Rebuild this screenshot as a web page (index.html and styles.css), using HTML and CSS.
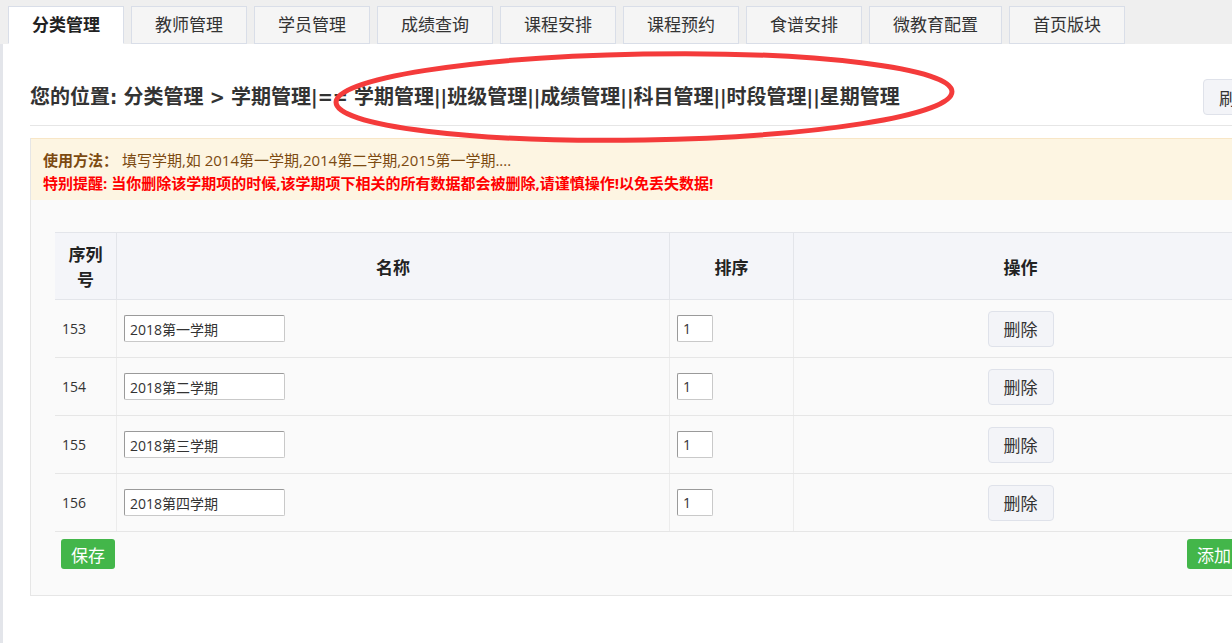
FILE: index.html
```html
<!DOCTYPE html>
<html lang="zh-CN">
<head>
<meta charset="utf-8">
<title>学期管理</title>
<link rel="stylesheet" href="styles.css">
</head>
<body>
<div class="page">
  <div class="strip"></div>
  <div class="main">
    <nav class="tabs">
      <a class="tab active">分类管理</a>
      <a class="tab">教师管理</a>
      <a class="tab">学员管理</a>
      <a class="tab">成绩查询</a>
      <a class="tab">课程安排</a>
      <a class="tab">课程预约</a>
      <a class="tab">食谱安排</a>
      <a class="tab">微教育配置</a>
      <a class="tab">首页版块</a>
    </nav>
    <div class="content">
      <div class="crumb-row">
        <h2 class="crumb">您的位置: 分类管理 &gt; 学期管理|== 学期管理||班级管理||成绩管理||科目管理||时段管理||星期管理</h2>
        <button class="btn-light">刷新</button>
      </div>
      <div class="box">
        <div class="alert">
          <p class="alert-line"><b class="label">使用方法：</b> 填写学期,如 2014第一学期,2014第二学期,2015第一学期....</p>
          <p class="alert-line warn">特别提醒: 当你删除该学期项的时候,该学期项下相关的所有数据都会被删除,请谨慎操作!以免丢失数据!</p>
        </div>
        <div class="box-body">
          <table class="grid">
            <thead>
              <tr>
                <th class="c-id">序列号</th>
                <th class="c-name">名称</th>
                <th class="c-sort">排序</th>
                <th class="c-op">操作</th>
              </tr>
            </thead>
            <tbody>
              <tr>
                <td>153</td>
                <td><input class="in-name" type="text" value="2018第一学期"></td>
                <td><input class="in-sort" type="text" value="1"></td>
                <td class="op"><button class="btn-light">删除</button></td>
              </tr>
              <tr>
                <td>154</td>
                <td><input class="in-name" type="text" value="2018第二学期"></td>
                <td><input class="in-sort" type="text" value="1"></td>
                <td class="op"><button class="btn-light">删除</button></td>
              </tr>
              <tr>
                <td>155</td>
                <td><input class="in-name" type="text" value="2018第三学期"></td>
                <td><input class="in-sort" type="text" value="1"></td>
                <td class="op"><button class="btn-light">删除</button></td>
              </tr>
              <tr>
                <td>156</td>
                <td><input class="in-name" type="text" value="2018第四学期"></td>
                <td><input class="in-sort" type="text" value="1"></td>
                <td class="op"><button class="btn-light">删除</button></td>
              </tr>
            </tbody>
          </table>
          <div class="actions">
            <button class="btn-green">保存</button>
            <button class="btn-green">添加</button>
          </div>
        </div>
      </div>
    </div>
  </div>
  <svg class="mark" width="700" height="110" viewBox="0 0 700 110">
    <ellipse cx="320" cy="52" rx="308" ry="43" fill="none" stroke="#f43b3b" stroke-width="5" transform="rotate(-1 320 52)"/>
  </svg>
</div>
</body>
</html>
```

FILE: styles.css
```css
html, body {
  margin: 0;
  padding: 0;
  overflow: hidden;
  background: #fff;
}
body {
  font-family: "Open Sans", "Noto Sans CJK SC", sans-serif;
  color: #333;
}
.page {
  position: relative;
  display: flex;
  width: 1300px;
  height: 643px;
}
.strip {
  width: 3px;
  flex: none;
  background: #e3e5ea;
  margin-top: 4px;
}
.main {
  flex: 1;
  min-width: 0;
}
.tabs {
  display: flex;
  gap: 7px;
  height: 44px;
  box-sizing: border-box;
  padding: 6px 0 0 8px;
  background: #efefef;
  margin-left: -3px;
}
.tab {
  display: flex;
  align-items: center;
  height: 38px;
  box-sizing: border-box;
  padding: 0 23px 3px;
  border: 1px solid #d9dee8;
  background: #f5f5f5;
  font-family: "Noto Sans CJK SC", sans-serif;
  font-size: 17px;
  color: #333;
  white-space: nowrap;
}
.tab.active {
  background: #fff;
  border-bottom-color: #fff;
  font-weight: 700;
  color: #222;
}
.content {
  padding: 0 0 0 27px;
  width: 1239px;
}
.crumb-row {
  display: flex;
  align-items: center;
  justify-content: space-between;
  padding: 35px 0 10px;
  border-bottom: 1px solid #e6e6e6;
}
.crumb {
  margin: 0;
  font-family: "DejaVu Sans Condensed", "Noto Sans CJK SC", sans-serif;
  font-size: 20px;
  font-weight: 700;
  color: #333;
  line-height: 36px;
  white-space: nowrap;
}
.btn-light {
  width: 66px;
  height: 36px;
  border: 1px solid #dfe2ea;
  border-radius: 4px;
  background: #f3f4f8;
  font-family: "Noto Sans CJK SC", sans-serif;
  font-size: 17px;
  color: #333;
  padding: 0;
}
.box {
  margin-top: 12px;
  border: 1px solid #e6e6e6;
  border-top: none;
}
.alert {
  background: #fdf5e2;
  border-top: 1px solid #f8e6c6;
  padding: 10px 12px 5px;
}
.alert-line {
  margin: 0;
  font-size: 15px;
  line-height: 23px;
  color: #7c4a11;
  white-space: nowrap;
}
.label {
  color: #7c4a11;
  margin-right: 0;
}
.warn {
  color: #ff0000;
  font-weight: 700;
}
.box-body {
  background: #fafafa;
  padding: 32px 24px 26px;
}
.grid {
  width: 1192px;
  border-collapse: collapse;
  font-size: 14px;
  color: #333;
}
.grid th {
  height: 66px;
  background: #f4f5f9;
  font-family: "Noto Sans CJK SC", sans-serif;
  font-size: 17px;
  font-weight: 700;
  color: #222;
  border-top: 1px solid #e3e5ea;
  border-bottom: 1px solid #e3e5ea;
  border-left: 1px solid #e3e5ea;
  padding: 0 8px;
  line-height: 25px;
}
.grid th:first-child,
.grid td:first-child {
  border-left: none;
}
.grid td {
  height: 57px;
  padding: 0 7px;
  border-bottom: 1px solid #e6e6e6;
  border-left: 1px solid #ececec;
}
.c-id { width: 45px; }
.c-name { width: 536px; }
.c-sort { width: 107px; }
.op { text-align: center; }
.in-name,
.in-sort {
  height: 27px;
  box-sizing: border-box;
  border: 1px solid #c9c9c9;
  border-top-color: #9a9a9a;
  border-left-color: #9a9a9a;
  border-radius: 2px;
  background: #fff;
  font-family: "Open Sans", "Noto Sans CJK SC", sans-serif;
  font-size: 14px;
  color: #333;
  padding: 0 5px;
  display: block;
}
.in-name { width: 161px; }
.in-sort { width: 36px; }
.actions {
  display: flex;
  justify-content: space-between;
  padding: 7px 3px 0 6px;
}
.btn-green {
  width: 54px;
  height: 30px;
  border: none;
  border-radius: 3px;
  background: #43b64a;
  color: #fff;
  font-family: "Noto Sans CJK SC", sans-serif;
  font-size: 17px;
  padding: 0;
}
.mark {
  position: absolute;
  left: 324px;
  top: 45px;
  pointer-events: none;
}
```
